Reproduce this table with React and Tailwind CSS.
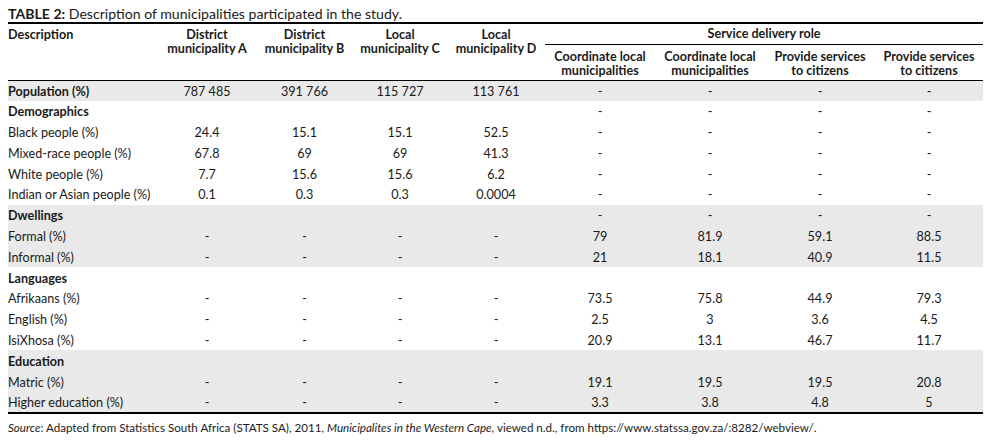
import React from "react";

const F = { fontFamily: "Lato, 'Open Sans', sans-serif" };

const rows = [
  { label: "Population (%)", bold: true, gray: true, a: ["787 485", "391 766", "115 727", "113 761"], s: ["-", "-", "-", "-"] },
  { label: "Demographics", bold: true, a: ["", "", "", ""], s: ["-", "-", "-", "-"] },
  { label: "Black people (%)", a: ["24.4", "15.1", "15.1", "52.5"], s: ["-", "-", "-", "-"] },
  { label: "Mixed-race people (%)", a: ["67.8", "69", "69", "41.3"], s: ["-", "-", "-", "-"] },
  { label: "White people (%)", a: ["7.7", "15.6", "15.6", "6.2"], s: ["-", "-", "-", "-"] },
  { label: "Indian or Asian people (%)", a: ["0.1", "0.3", "0.3", "0.0004"], s: ["-", "-", "-", "-"] },
  { label: "Dwellings", bold: true, gray: true, a: ["", "", "", ""], s: ["-", "-", "-", "-"] },
  { label: "Formal (%)", gray: true, a: ["-", "-", "-", "-"], s: ["79", "81.9", "59.1", "88.5"] },
  { label: "Informal (%)", gray: true, a: ["-", "-", "-", "-"], s: ["21", "18.1", "40.9", "11.5"] },
  { label: "Languages", bold: true, a: ["", "", "", ""], s: ["", "", "", ""] },
  { label: "Afrikaans (%)", a: ["-", "-", "-", "-"], s: ["73.5", "75.8", "44.9", "79.3"] },
  { label: "English (%)", a: ["-", "-", "-", "-"], s: ["2.5", "3", "3.6", "4.5"] },
  { label: "IsiXhosa (%)", a: ["-", "-", "-", "-"], s: ["20.9", "13.1", "46.7", "11.7"] },
  { label: "Education", bold: true, gray: true, a: ["", "", "", ""], s: ["", "", "", ""] },
  { label: "Matric (%)", gray: true, a: ["-", "-", "-", "-"], s: ["19.1", "19.5", "19.5", "20.8"] },
  { label: "Higher education (%)", gray: true, a: ["-", "-", "-", "-"], s: ["3.3", "3.8", "4.8", "5"] },
];

export default function App() {
  return (
    <div className="w-[987px] h-[441px] bg-white text-[#1a1a1a] text-[12.6px] pt-[6px] px-[8px] overflow-hidden" style={F}>
      <div className="leading-[15px] text-[14.1px]">
        <span className="font-bold">TABLE 2:</span> Description of municipalities participated in the study.
      </div>
      <table className="w-[975px] table-fixed border-collapse mt-[1px]">
        <colgroup>
          <col className="w-[150px]" />
          <col className="w-[98px]" />
          <col className="w-[97px]" />
          <col className="w-[94px]" />
          <col className="w-[98px]" />
          <col className="w-[110px]" />
          <col className="w-[110px]" />
          <col className="w-[110px]" />
          <col className="w-[108px]" />
        </colgroup>
        <thead className="font-bold leading-[14px]">
          <tr className="border-t-[2px] border-black h-[21px]">
            <th rowSpan={2} className="text-left align-top pt-[4px] font-bold">Description</th>
            <th rowSpan={2} className="text-center align-top pt-[4px] font-bold">District<br />municipality A</th>
            <th rowSpan={2} className="text-center align-top pt-[4px] font-bold">District<br />municipality B</th>
            <th rowSpan={2} className="text-center align-top pt-[4px] font-bold">Local<br />municipality C</th>
            <th rowSpan={2} className="text-center align-top pt-[4px] font-bold">Local<br />municipality D</th>
            <th colSpan={4} className="text-center align-middle font-bold border-b border-black">Service delivery role</th>
          </tr>
          <tr className="h-[36px] border-b border-black leading-[14.5px]">
            <th className="text-center align-top pt-[5px] font-bold">Coordinate local<br />municipalities</th>
            <th className="text-center align-top pt-[5px] font-bold">Coordinate local<br />municipalities</th>
            <th className="text-center align-top pt-[5px] font-bold">Provide services<br />to citizens</th>
            <th className="text-center align-top pt-[5px] font-bold">Provide services<br />to citizens</th>
          </tr>
        </thead>
        <tbody className="border-b-[2px] border-black">
          {rows.map((r, i) => (
            <tr key={i} className={"h-[20.8px] leading-[14px] " + (r.gray ? "bg-[#e9e9e9]" : "bg-white")}>
              <td className={"text-left pt-[2px] pb-0 px-0 " + (r.bold ? "font-bold" : "")}>{r.label}</td>
              {r.a.map((v, j) => (
                <td key={"a" + j} className="text-center pt-[2px] pb-0 px-0">{v}</td>
              ))}
              {r.s.map((v, j) => (
                <td key={"s" + j} className="text-center pt-[2px] pb-0 px-0">{v}</td>
              ))}
            </tr>
          ))}
        </tbody>
      </table>
      <div className="mt-[6px] leading-[15px] text-[11.6px]">
        <span className="italic">Source</span>: Adapted from Statistics South Africa (STATS SA), 2011, <span className="italic">Municipalites in the Western Cape</span>, viewed n.d., from https://www.statssa.gov.za/:8282/webview/.
      </div>
    </div>
  );
}
